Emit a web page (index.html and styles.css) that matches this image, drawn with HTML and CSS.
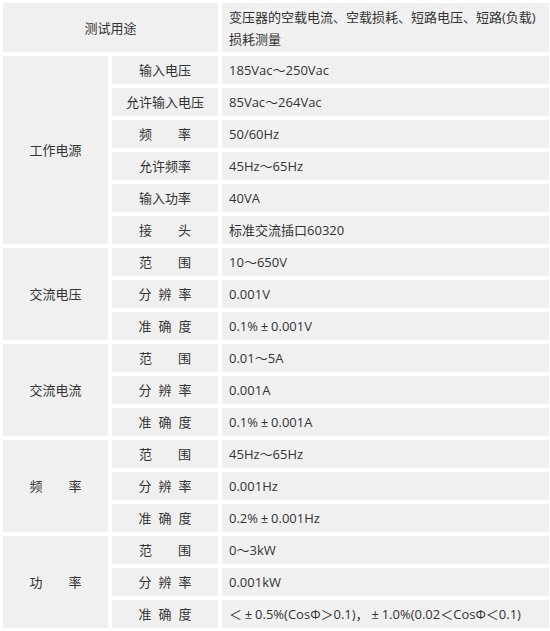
FILE: index.html
```html
<!DOCTYPE html>
<html lang="zh-CN">
<head>
<meta charset="utf-8">
<title>测试参数</title>
<link rel="stylesheet" href="styles.css">
</head>
<body>
<table class="spec">
  <colgroup>
    <col class="c1"><col class="c2"><col class="c3">
  </colgroup>
  <tr class="head">
    <td colspan="2" class="center">测试用途</td>
    <td class="val">变压器的空载电流、空载损耗、短路电压、短路(负载)损耗测量</td>
  </tr>
  <tr>
    <td rowspan="6" class="center">工作电源</td>
    <td class="center">输入电压</td>
    <td class="val">185Vac～250Vac</td>
  </tr>
  <tr><td class="center">允许输入电压</td><td class="val">85Vac～264Vac</td></tr>
  <tr><td class="center">频　　率</td><td class="val">50/60Hz</td></tr>
  <tr><td class="center">允许频率</td><td class="val">45Hz～65Hz</td></tr>
  <tr><td class="center">输入功率</td><td class="val">40VA</td></tr>
  <tr><td class="center">接　　头</td><td class="val">标准交流插口60320</td></tr>

  <tr>
    <td rowspan="3" class="center">交流电压</td>
    <td class="center">范　　围</td>
    <td class="val">10～650V</td>
  </tr>
  <tr><td class="center sp">分 辨 率</td><td class="val">0.001V</td></tr>
  <tr><td class="center sp">准 确 度</td><td class="val">0.1%<span class="pm">±</span>0.001V</td></tr>

  <tr>
    <td rowspan="3" class="center">交流电流</td>
    <td class="center">范　　围</td>
    <td class="val">0.01～5A</td>
  </tr>
  <tr><td class="center sp">分 辨 率</td><td class="val">0.001A</td></tr>
  <tr><td class="center sp">准 确 度</td><td class="val">0.1%<span class="pm">±</span>0.001A</td></tr>

  <tr>
    <td rowspan="3" class="center">频　　率</td>
    <td class="center">范　　围</td>
    <td class="val">45Hz～65Hz</td>
  </tr>
  <tr><td class="center sp">分 辨 率</td><td class="val">0.001Hz</td></tr>
  <tr><td class="center sp">准 确 度</td><td class="val">0.2%<span class="pm">±</span>0.001Hz</td></tr>

  <tr>
    <td rowspan="3" class="center">功　　率</td>
    <td class="center">范　　围</td>
    <td class="val">0～3kW</td>
  </tr>
  <tr><td class="center sp">分 辨 率</td><td class="val">0.001kW</td></tr>
  <tr><td class="center sp">准 确 度</td><td class="val">＜<span class="pm">±</span>0.5%(CosΦ＞0.1)，<span class="pm">±</span>1.0%(0.02＜CosΦ＜0.1)</td></tr>
</table>
</body>
</html>
```

FILE: styles.css
```css
html, body {
  margin: 0;
  padding: 0;
  background: #ffffff;
}

.spec {
  border-collapse: separate;
  border-spacing: 4px;
  margin: -1px 0 0 -1px;
  width: 554px;
  table-layout: fixed;
  font-family: "Open Sans", "Noto Sans CJK SC", sans-serif;
  font-size: 13px;
  color: #333333;
}

.c1 { width: 105px; }
.c2 { width: 106px; }
.c3 { width: 327px; }

.spec td {
  background: #f0f0f0;
  height: 28px;
  padding: 0;
  line-height: 22px;
  vertical-align: middle;
}

.spec tr.head td {
  height: 49px;
}

.center {
  text-align: center;
}

.val {
  text-align: left;
  padding: 0 6px 0 7px !important;
}

.sp {
  word-spacing: 3.6px;
}

.pm {
  padding: 0 2.8px;
}
```
